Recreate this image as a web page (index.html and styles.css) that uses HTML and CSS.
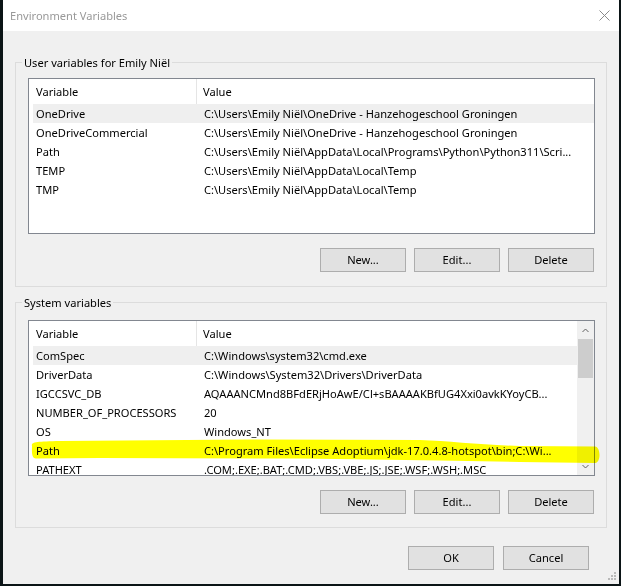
FILE: index.html
```html
<!DOCTYPE html>
<html lang="en">
<head>
<meta charset="utf-8">
<title>Environment Variables</title>
<link rel="stylesheet" href="styles.css">
</head>
<body>
<div class="window">
  <div class="titlebar">
    <span class="title">Environment Variables</span>
    <svg class="close" viewBox="0 0 11 11" width="11" height="11"><path d="M0.5 0.5 L10.5 10.5 M10.5 0.5 L0.5 10.5" stroke="#8a8a8a" stroke-width="1" fill="none"/></svg>
  </div>
  <div class="client">
    <div class="group group-user">
      <span class="group-label">User variables for Emily Niël</span>
      <div class="list">
        <div class="list-body">
          <div class="lv-head"><div class="c1">Variable</div><div class="c2">Value</div></div>
          <div class="row sel"><div class="c1">OneDrive</div><div class="c2">C:\Users\Emily Niël\OneDrive - Hanzehogeschool Groningen</div></div>
          <div class="row"><div class="c1">OneDriveCommercial</div><div class="c2">C:\Users\Emily Niël\OneDrive - Hanzehogeschool Groningen</div></div>
          <div class="row"><div class="c1">Path</div><div class="c2">C:\Users\Emily Niël\AppData\Local\Programs\Python\Python311\Scri...</div></div>
          <div class="row"><div class="c1">TEMP</div><div class="c2">C:\Users\Emily Niël\AppData\Local\Temp</div></div>
          <div class="row"><div class="c1">TMP</div><div class="c2">C:\Users\Emily Niël\AppData\Local\Temp</div></div>
        </div>
      </div>
      <div class="btns">
        <button class="btn">New...</button>
        <button class="btn">Edit...</button>
        <button class="btn">Delete</button>
      </div>
    </div>

    <div class="group group-sys">
      <span class="group-label">System variables</span>
      <div class="list">
        <div class="list-body">
          <div class="lv-head"><div class="c1">Variable</div><div class="c2">Value</div></div>
          <div class="row sel"><div class="c1">ComSpec</div><div class="c2">C:\Windows\system32\cmd.exe</div></div>
          <div class="row"><div class="c1">DriverData</div><div class="c2">C:\Windows\System32\Drivers\DriverData</div></div>
          <div class="row"><div class="c1">IGCCSVC_DB</div><div class="c2">AQAAANCMnd8BFdERjHoAwE/Cl+sBAAAAKBfUG4Xxi0avkKYoyCB...</div></div>
          <div class="row"><div class="c1">NUMBER_OF_PROCESSORS</div><div class="c2">20</div></div>
          <div class="row"><div class="c1">OS</div><div class="c2">Windows_NT</div></div>
          <div class="row"><div class="c1">Path</div><div class="c2">C:\Program Files\Eclipse Adoptium\jdk-17.0.4.8-hotspot\bin;C:\Wi...</div></div>
          <div class="row"><div class="c1">PATHEXT</div><div class="c2">.COM;.EXE;.BAT;.CMD;.VBS;.VBE;.JS;.JSE;.WSF;.WSH;.MSC</div></div>
        </div>
        <div class="vscroll">
          <div class="sb-btn"><svg viewBox="0 0 7 4" width="7" height="4"><polyline points="0.5,4 3.5,1 6.5,4" fill="none" stroke="#606060" stroke-width="1"/></svg></div>
          <div class="sb-thumb"></div>
          <div class="sb-track"></div>
          <div class="sb-btn"><svg viewBox="0 0 7 4" width="7" height="4"><polyline points="0.5,0 3.5,3 6.5,0" fill="none" stroke="#606060" stroke-width="1"/></svg></div>
        </div>
      </div>
      <div class="btns">
        <button class="btn">New...</button>
        <button class="btn">Edit...</button>
        <button class="btn">Delete</button>
      </div>
    </div>

    <div class="dlg-btns">
      <button class="btn">OK</button>
      <button class="btn">Cancel</button>
    </div>
  </div>

  <svg class="marker" viewBox="0 0 616 584" width="616" height="584">
    <path transform="translate(-3 0)" d="M32,446 C31,442 36,441.5 60,441 L250,439.5 L420,440 C450,441 480,445 520,446 L595,446.5 C601,447 601,463 595,463 L520,462 L440,460.5 L300,458.5 L100,458 L36,458.5 C31,458.5 32,450 32,446 Z" fill="#ffff00"/>
  </svg>

  <svg class="grip" viewBox="0 0 9 9" width="9" height="9">
    <rect x="7" y="1" width="2" height="2" fill="#b9b9b9"/>
    <rect x="4" y="4" width="2" height="2" fill="#b9b9b9"/>
    <rect x="7" y="4" width="2" height="2" fill="#b9b9b9"/>
    <rect x="1" y="7" width="2" height="2" fill="#b9b9b9"/>
    <rect x="4" y="7" width="2" height="2" fill="#b9b9b9"/>
    <rect x="7" y="7" width="2" height="2" fill="#b9b9b9"/>
  </svg>
</div>
</body>
</html>
```
FILE: styles.css
```css
* { box-sizing: border-box; }

html, body {
  margin: 0;
  height: 100%;
}

body {
  background: #0b1416;
  font-family: "Noto Sans", "Open Sans", sans-serif;
  font-size: 11.1px;
  color: #000;
}

.window {
  position: relative;
  margin-left: 3px;
  width: 616px;
  height: 584px;
  background: #f0f0f0;
  overflow: hidden;
  display: flex;
  flex-direction: column;
}

.titlebar {
  height: 31px;
  flex: none;
  background: #fff;
  display: flex;
  align-items: center;
  justify-content: space-between;
  padding: 0 9px 0 7px;
  color: #999;
}

.title {
  line-height: 16px;
}

.close {
  display: block;
}

.client {
  flex: 1;
  padding: 31px 12px 0 12px;
}

.group {
  border: 1px solid #dcdcdc;
  padding: 0 11px 14px 12px;
}

.group + .group {
  margin-top: 15px;
}

.group-label {
  display: block;
  width: fit-content;
  height: 15px;
  line-height: 15px;
  margin: -8px 0 0 -6px;
  padding: 0 2px;
  background: #f0f0f0;
  white-space: nowrap;
}

.list {
  margin-top: 8px;
  height: 156px;
  border: 1px solid #828790;
  background: #fff;
  overflow: hidden;
  display: flex;
}

.group-sys {
  padding-bottom: 13px;
}

.group-sys .list {
  margin-top: 10px;
}

.list-body {
  flex: 1;
  min-width: 0;
}

.lv-head {
  display: flex;
  height: 25px;
  line-height: 25px;
  white-space: nowrap;
}

.lv-head .c1 {
  width: 168px;
  flex: none;
  padding-left: 7px;
  border-right: 1px solid #e5e5e5;
}

.lv-head .c2 {
  padding-left: 6px;
}

.row {
  display: flex;
  height: 19px;
  line-height: 19px;
  margin-left: 4px;
  white-space: nowrap;
}

.row.sel {
  background: #efefef;
}

.row .c1 {
  width: 164px;
  flex: none;
  padding-left: 3px;
  overflow: hidden;
}

.row .c2 {
  padding-left: 7px;
}

.c2 {
  flex: 1;
  min-width: 0;
  overflow: hidden;
}

.vscroll {
  width: 17px;
  flex: none;
  background: #f0f0f0;
  display: flex;
  flex-direction: column;
}

.sb-btn {
  height: 17px;
  flex: none;
  display: flex;
  align-items: center;
  justify-content: center;
}

.sb-btn svg {
  display: block;
}

.sb-thumb {
  margin: 1px 1px 0 1px;
  height: 39px;
  flex: none;
  background: #cdcdcd;
}

.sb-track {
  flex: 1;
}

.btns {
  display: flex;
  justify-content: flex-end;
  gap: 8px;
  margin-top: 14px;
  padding-right: 1px;
}

.btn {
  width: 86px;
  height: 24px;
  padding: 0;
  border: 1px solid #adadad;
  background: #e1e1e1;
  color: #000;
  font: inherit;
  line-height: 22px;
  text-align: center;
  border-radius: 0;
}

.dlg-btns {
  display: flex;
  justify-content: flex-end;
  gap: 9px;
  margin-top: 18px;
  padding-right: 18px;
}

.marker {
  position: absolute;
  left: 0;
  top: 0;
  pointer-events: none;
  mix-blend-mode: multiply;
}

.grip {
  position: absolute;
  right: 3px;
  bottom: 4px;
  display: block;
}
```
